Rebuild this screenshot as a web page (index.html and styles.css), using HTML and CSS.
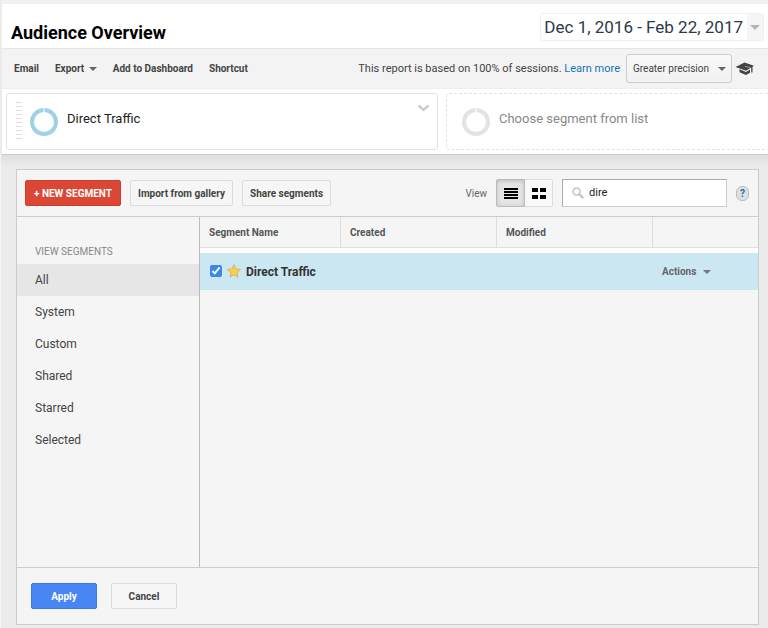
FILE: index.html
```html
<!DOCTYPE html>
<html lang="en">
<head>
<meta charset="utf-8">
<title>Audience Overview</title>
<link rel="stylesheet" href="styles.css">
</head>
<body>
<header class="report-head">
  <div class="title-row">
    <h1>Audience Overview</h1>
    <button class="date-range" type="button"><span class="date-text">Dec 1, 2016 - Feb 22, 2017</span><span class="date-arrow"><i class="caret caret-large"></i></span></button>
  </div>
  <div class="toolbar">
    <button class="tool" type="button">Email</button>
    <button class="tool" type="button">Export <i class="caret"></i></button>
    <button class="tool" type="button">Add to Dashboard</button>
    <button class="tool" type="button">Shortcut</button>
    <p class="sampling">This report is based on 100% of sessions. <a href="#">Learn more</a></p>
    <div class="precision">
      <select aria-label="Precision"><option>Greater precision</option></select>
      <i class="caret"></i>
    </div>
    <svg class="cap" viewBox="0 0 20 16" aria-hidden="true"><path d="M.5 6 9.500 1.500 19 4.800 17.500 5.700V11.500H16.200V6.600L11 9.800Z" fill="#444"/><path d="M4.500 8.300 11 11l4-2.400v3.200L11 14 4.500 11.300Z" fill="#444"/><path d="m10 5.300 5.500 1.400" stroke="#aaa" stroke-width=".8"/></svg>
  </div>
  <div class="segments">
    <div class="segment">
      <span class="grip"></span>
      <svg class="ring" viewBox="0 0 28 28" aria-hidden="true"><circle cx="14" cy="14" r="12" fill="none" stroke="#9fd1e7" stroke-width="4"/><path d="M14 0v4" stroke="#fff"/></svg>
      <span class="segment-name">Direct Traffic</span>
      <svg class="chevron" viewBox="0 0 12 8" aria-hidden="true"><path d="m1 1.500 5 4.500 5-4.500" fill="none" stroke="#ccc" stroke-width="2.400"/></svg>
    </div>
    <div class="segment segment-empty">
      <svg class="ring" viewBox="0 0 28 28" aria-hidden="true"><circle cx="14" cy="14" r="12" fill="none" stroke="#e3e3e3" stroke-width="4"/><path d="M14 0v4" stroke="#fff"/></svg>
      <span class="segment-name">Choose segment from list</span>
    </div>
  </div>
</header>
<main class="workspace">
  <section class="panel">
    <div class="panel-bar">
      <button class="btn btn-new" type="button">+ NEW SEGMENT</button>
      <button class="btn btn-import" type="button">Import from gallery</button>
      <button class="btn" type="button">Share segments</button>
      <span class="view-label">View</span>
      <div class="view-switch">
        <button class="view active" type="button" aria-label="List view"><svg width="14" height="11" viewBox="0 0 14 11"><path d="M0 1h14M0 4h14M0 7h14M0 10h14" stroke="#000" stroke-width="2"/></svg></button>
        <button class="view" type="button" aria-label="Grid view"><svg width="14" height="11" viewBox="0 0 14 11"><path d="M0 0h6v4H0zM8 0h6v4H8zM0 7h6v4H0zM8 7h6v4H8z"/></svg></button>
      </div>
      <div class="search">
        <svg width="12" height="12" viewBox="0 0 12 12" aria-hidden="true"><circle cx="4.500" cy="4.500" r="3.500" fill="none" stroke="#c4c4c4" stroke-width="1.600"/><path d="m7 7 4.300 4.300" stroke="#c4c4c4" stroke-width="2.200"/></svg>
        <input type="text" value="dire" aria-label="Search segments">
      </div>
      <button class="help" type="button" aria-label="Help">?</button>
    </div>
    <div class="panel-body">
      <nav class="filters">
        <h2>VIEW SEGMENTS</h2>
        <a class="current" href="#">All</a>
        <a href="#">System</a>
        <a href="#">Custom</a>
        <a href="#">Shared</a>
        <a href="#">Starred</a>
        <a href="#">Selected</a>
      </nav>
      <div class="results">
        <table>
          <colgroup><col class="col-name"><col class="col-date"><col class="col-date"><col></colgroup>
          <thead><tr><th>Segment Name</th><th>Created</th><th>Modified</th><th></th></tr></thead>
          <tbody>
            <tr class="spacer"><td colspan="4"></td></tr>
            <tr class="row">
              <td colspan="3"><div class="row-name"><input type="checkbox" id="direct" checked><svg width="14" height="14" viewBox="0 0 14 14" aria-hidden="true"><path d="m7 .7 1.900 4.200 4.600.5-3.400 3.100.9 4.600-4-2.300-4 2.300.9-4.600L.5 5.400l4.600-.5Z" fill="#f8cf55" stroke="#d9ab4c" stroke-width=".8"/></svg><label for="direct">Direct Traffic</label></div></td>
              <td><button class="actions" type="button">Actions <i class="caret"></i></button></td>
            </tr>
          </tbody>
        </table>
      </div>
    </div>
    <div class="panel-foot">
      <button class="btn btn-apply" type="button">Apply</button>
      <button class="btn btn-cancel" type="button">Cancel</button>
    </div>
  </section>
</main>
</body>
</html>
```
FILE: styles.css
```css
* { box-sizing: border-box; }
body {
  margin: 0;
  min-height: 100vh;
  display: flex;
  flex-direction: column;
  overflow-x: hidden;
  background: #ebebeb;
  color: #444;
  font: 10px/16px Roboto, "Liberation Sans", sans-serif;
}
button, input, select { font: inherit; color: inherit; margin: 0; }
button { padding: 0; border: 0; background: none; white-space: nowrap; }
h1, h2, p { margin: 0; }

.caret {
  display: inline-block;
  border: 4px solid transparent;
  border-top-color: #666;
  border-bottom-width: 0;
  vertical-align: middle;
}
.caret-large { border-width: 5px 5px 0; border-top-color: #b5b5b5; }

.report-head {
  margin-left: 2px;
  border-top: 4px solid #f1f1f1;
  border-bottom: 1px solid #ccc;
  background: #fff;
}
.title-row {
  display: flex;
  justify-content: space-between;
  align-items: flex-start;
  height: 44px;
  padding: 9px 4px 0 9px;
}
h1 { margin-top: 8px; color: #000; font-size: 18px; line-height: 24px; font-weight: 700; }
.date-range {
  display: flex;
  height: 28px;
  border: 1px solid #f0f0f0;
  border-radius: 3px;
  color: #2b3a49;
  font-size: 17px;
  line-height: 26px;
}
.date-text { padding: 0 4px 0 3px; }
.date-arrow { display: flex; align-items: center; padding: 0 3px; background: #f5f5f5; }

.toolbar {
  display: flex;
  align-items: center;
  gap: 16px;
  height: 41px;
  padding: 0 13px 0 12px;
  border-top: 1px solid #e6e6e6;
  border-bottom: 1px solid #eee;
  background: #f3f3f3;
}
.tool { font-weight: 700; }
.tool .caret { margin-left: 2px; }
.sampling { margin-left: auto; font-size: 11px; white-space: nowrap; }
.sampling a { color: #1173b5; text-decoration: none; }
.precision { display: flex; align-items: center; position: relative; margin-left: -10px; }
.precision select {
  width: 106px;
  height: 29px;
  padding: 0 6px;
  appearance: none;
  border: 1px solid #ccc;
  border-radius: 3px;
  background: linear-gradient(#f9f9f9, #f1f1f1);
}
.precision .caret { position: absolute; right: 6px; pointer-events: none; }
.cap { flex: none; width: 20px; height: 16px; margin-left: -13px; }

.segments { display: flex; gap: 8px; height: 65px; padding: 4px 0 4px 4px; overflow: hidden; }
.segment {
  flex: 0 0 432px;
  display: flex;
  align-items: center;
  height: 57px;
  padding: 0 7px 0 9px;
  border: 1px solid #e2e2e2;
  border-radius: 3px;
  color: #222;
}
.segment-empty { padding-left: 15px; border-style: dashed; color: #888; }
.grip {
  width: 6px;
  height: 39px;
  margin-right: 8px;
  background: repeating-linear-gradient(#ddd 0 1px, #fff 1px 4px);
}
.ring { width: 28px; height: 28px; margin-right: 9px; }
.segment-name { margin-bottom: 5px; font-size: 13px; }
.chevron { width: 13px; height: 8px; margin: 0 0 28px auto; }

.workspace {
  flex: 1;
  display: flex;
  padding: 14px 9px 3px 15px;
  border-left: 1px solid #f5f5f5;
  background: linear-gradient(#dfdfdf, #ebebeb 12px);
}
.panel {
  flex: 1;
  display: flex;
  flex-direction: column;
  min-width: 0;
  border: 1px solid #ccc;
  background: #f5f5f5;
}
.panel-bar {
  display: flex;
  align-items: center;
  height: 47px;
  padding: 0 9px 0 8px;
  border-bottom: 1px solid #ccc;
}
.btn {
  height: 26px;
  padding: 1px 7px 0;
  border: 1px solid #dcdcdc;
  border-radius: 2px;
  background: #f6f6f6;
  font-weight: 700;
}
.btn-new { padding: 1px 8px 0; margin-right: 9px; border-color: #cf3e2b; background: #da4835; color: #fff; }
.btn-import { margin-right: 9px; }
.view-label { margin: 2px 9px 0 auto; color: #666; }
.view-switch { display: flex; margin-right: 9px; }
.view {
  display: grid;
  place-items: center;
  width: 28px;
  height: 28px;
  border: 1px solid #ddd;
  border-left: 0;
  border-radius: 0 2px 2px 0;
  background: #f9f9f9;
}
.view.active {
  width: 29px;
  border: 1px solid #bbb;
  border-radius: 2px 0 0 2px;
  background: #e5e5e5;
  box-shadow: inset 0 1px 4px #bbb;
}
.search {
  display: flex;
  align-items: center;
  gap: 5px;
  width: 165px;
  height: 28px;
  padding: 0 9px;
  border: 1px solid #ccc;
  border-color: #aaa #ccc #ccc #aaa;
  background: #fff;
}
.search svg { flex: none; }
.search input {
  flex: 1;
  min-width: 0;
  padding: 0;
  border: 0;
  outline: 0;
  background: none;
  color: #222;
  font-size: 11px;
}
.help {
  width: 13px;
  height: 15px;
  margin-left: 9px;
  border: 1px solid #bbb;
  border-radius: 6px;
  background: #e0e0e0;
  color: #1b6eac;
  font-weight: 700;
  line-height: 13px;
}

.panel-body { flex: 1; display: flex; }
.filters { flex: 0 0 183px; padding-top: 23px; border-right: 1px solid #bbb; font-size: 12px; }
.filters h2 { padding: 4px 18px; color: #888; font-size: 10px; line-height: 16px; font-weight: 400; }
.filters a { display: block; padding: 0 18px; color: #444; line-height: 32px; text-decoration: none; }
.filters .current { background: #e6e6e6; }
.results { flex: 1; }
table { width: 100%; table-layout: fixed; border-collapse: separate; border-spacing: 0; }
.col-name { width: 141px; }
.col-date { width: 156px; }
th {
  height: 31px;
  padding: 2px 9px 0;
  border-right: 1px solid #ddd;
  border-bottom: 1px solid #e0e0e0;
  color: #555;
  text-align: left;
}
th:last-child { border-right: 0; }
td { padding: 0 9px; }
.spacer td { height: 5px; padding: 0; background: #fff; }
.row td { height: 37px; background: #cbe7f2; }
.row-name { display: flex; align-items: center; color: #333; font-size: 12px; font-weight: 700; }
.row-name input { width: 12px; height: 12px; margin: 0 5px 2px 1px; accent-color: #3986ee; }
.row-name svg { margin: 0 5px 2px 0; }
.actions { color: #666; font-weight: 700; }
.actions .caret { margin-left: 4px; border-top-color: #777; }

.panel-foot { display: flex; gap: 14px; height: 57px; padding: 15px 14px; border-top: 1px solid #ccc; }
.btn-apply { width: 66px; border-color: #3b79e5; background: #4886f3; color: #fff; }
.btn-cancel { width: 66px; }
```
